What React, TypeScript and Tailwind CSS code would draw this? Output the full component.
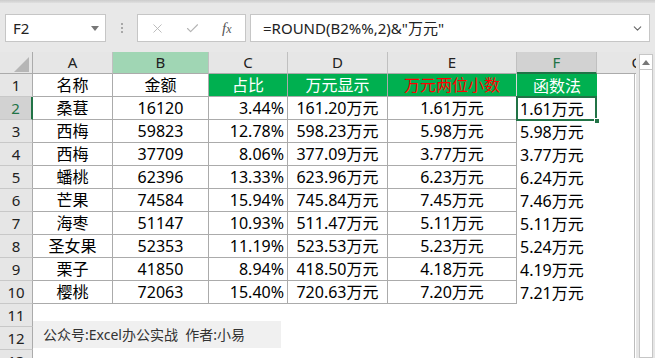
import { X, Check, ChevronDown } from 'lucide-react';

type Row = [string, string, string, string, string, string];

const rows: Row[] = [
  ['桑葚', '16120', '3.44%', '161.20万元', '1.61万元', '1.61万元'],
  ['西梅', '59823', '12.78%', '598.23万元', '5.98万元', '5.98万元'],
  ['西梅', '37709', '8.06%', '377.09万元', '3.77万元', '3.77万元'],
  ['蟠桃', '62396', '13.33%', '623.96万元', '6.23万元', '6.24万元'],
  ['芒果', '74584', '15.94%', '745.84万元', '7.45万元', '7.46万元'],
  ['海枣', '51147', '10.93%', '511.47万元', '5.11万元', '5.11万元'],
  ['圣女果', '52353', '11.19%', '523.53万元', '5.23万元', '5.24万元'],
  ['栗子', '41850', '8.94%', '418.50万元', '4.18万元', '4.19万元'],
  ['樱桃', '72063', '15.40%', '720.63万元', '7.20万元', '7.21万元'],
];

const bordered = 'border-r border-b border-[#ababab]';
const rowHead = 'w-[33px] shrink-0 border-r border-b border-r-[#ababab] border-b-[#c8c8c8] bg-[#e6e6e6] flex items-center justify-center text-[15px] text-[#222]';

const FormulaBar = () => (
  <div className="h-[52px] bg-[#e8e8e8] flex flex-col">
    <div className="h-[3px] bg-gradient-to-b from-[#cccccc] to-[#e0e0e0]" />
    <div className="flex items-start pt-[11px] pl-[5px]">
      <div className="w-[101px] h-[28px] bg-white border border-[#c6c6c6] flex items-center justify-between pl-[7px] pr-[6px] text-[15px] text-[#222]">
        <span>F2</span>
        <span className="w-0 h-0 border-l-[4px] border-r-[4px] border-t-[5px] border-l-transparent border-r-transparent border-t-[#777]" />
      </div>
      <div className="ml-[15px] mt-[9px] flex flex-col gap-[2px]">
        <span className="w-[2px] h-[2px] bg-[#a8a8a8]" />
        <span className="w-[2px] h-[2px] bg-[#a8a8a8]" />
        <span className="w-[2px] h-[2px] bg-[#a8a8a8]" />
      </div>
      <div className="ml-[14px] w-[109px] h-[28px] bg-white border border-[#c6c6c6] flex items-center pl-[12px]">
        <X size={15} strokeWidth={1.4} color="#b4b4b4" />
        <Check size={15} strokeWidth={1.8} color="#b4b4b4" className="ml-[20px]" />
        <span className="ml-[22px] font-[family-name:'Liberation_Serif',serif] italic text-[15px] text-[#555] leading-none">
          f<span className="text-[12px]">x</span>
        </span>
      </div>
      <div className="ml-[4px] w-[400px] h-[28px] bg-white border border-[#c6c6c6] flex items-center justify-between pl-[12px] pr-[5px] text-[15px] text-[#222]">
        <span>=ROUND(B2%%,2)&amp;"万元"</span>
        <ChevronDown size={13} strokeWidth={2} color="#666" />
      </div>
    </div>
  </div>
);

const HeaderRow = () => {
  const cols: [string, string, string][] = [
    ['A', 'w-[80px]', 'bg-[#e6e6e6] text-[#222]'],
    ['B', 'w-[96px]', 'bg-[#a0d6b4] text-[#222]'],
    ['C', 'w-[79px]', 'bg-[#e6e6e6] text-[#222]'],
    ['D', 'w-[100px]', 'bg-[#e6e6e6] text-[#222]'],
    ['E', 'w-[129px]', 'bg-[#e6e6e6] text-[#222]'],
  ];
  return (
    <div className="flex h-[22px]">
      <div className="w-[33px] shrink-0 bg-[#e6e6e6] border-r border-b border-[#ababab] flex items-end justify-end pr-[3px] pb-[1px]">
        <svg width="15" height="15" viewBox="0 0 15 15">
          <polygon points="0,15 15,0 15,15" fill="#b6b6b6" />
        </svg>
      </div>
      {cols.map(([l, w, c]) => (
        <div key={l} className={`${w} ${c} shrink-0 border-r border-r-[#c0c0c0] border-b border-b-[#ababab] flex items-center justify-center text-[15px]`}>
          {l}
        </div>
      ))}
      <div className="w-[80px] shrink-0 bg-[#d2d2d2] border-r border-r-[#c0c0c0] border-b-2 border-b-[#217346] flex items-center justify-center text-[15px] text-[#217346]">
        F
      </div>
      <div className="w-[80px] shrink-0 bg-[#e6e6e6] border-b border-b-[#ababab] flex items-center justify-center text-[15px] text-[#222]">
        G
      </div>
    </div>
  );
};

const TitleRow = () => (
  <div className="flex h-[23px]">
    <div className={rowHead}>1</div>
    <div className={`w-[80px] shrink-0 ${bordered} flex items-center justify-center`}>名称</div>
    <div className={`w-[96px] shrink-0 ${bordered} flex items-center justify-center`}>金额</div>
    <div className={`w-[79px] shrink-0 ${bordered} bg-[#00b050] text-white flex items-center justify-center`}>占比</div>
    <div className={`w-[100px] shrink-0 ${bordered} bg-[#00b050] text-white flex items-center justify-center`}>万元显示</div>
    <div className={`w-[129px] shrink-0 border-b border-[#ababab] border-r border-r-[#d9d9d9] bg-[#00b050] text-[#ff0000] flex items-center justify-center`}>万元两位小数</div>
    <div className="w-[80px] shrink-0 bg-[#00b050] text-white flex items-center justify-center">函数法</div>
    <div className="w-[38px] shrink-0 border-r border-[#bcbcbc]" />
  </div>
);

const DataRow = ({ n, r }: { n: number; r: Row }) => {
  const sel = n === 2;
  return (
    <div className="flex h-[23px]">
      <div
        className={
          sel
            ? 'w-[33px] shrink-0 border-b border-b-[#c8c8c8] border-r-2 border-r-[#217346] bg-[#d2d2d2] flex items-center justify-center text-[15px] text-[#217346]'
            : rowHead
        }
      >
        {n}
      </div>
      <div className={`w-[80px] shrink-0 ${bordered} flex items-center justify-center`}>{r[0]}</div>
      <div className={`w-[96px] shrink-0 ${bordered} flex items-center justify-center`}>{r[1]}</div>
      <div className={`w-[79px] shrink-0 ${bordered} flex items-center justify-end pr-[3px]`}>{r[2]}</div>
      <div className={`w-[100px] shrink-0 ${bordered} flex items-center justify-center`}>{r[3]}</div>
      <div className={`w-[129px] shrink-0 ${bordered} flex items-center justify-center`}>{r[4]}</div>
      <div className="relative w-[80px] shrink-0 flex items-center pl-[3px]">
        {r[5]}
        {sel && (
          <>
            <div className="absolute left-[-1px] top-[-1px] w-[81px] h-[25px] border-2 border-[#217346]" />
            <div className="absolute left-[77px] top-[21px] w-[6px] h-[6px] bg-[#217346] border border-white" />
          </>
        )}
      </div>
      <div className="w-[38px] shrink-0 border-r border-[#bcbcbc]" />
    </div>
  );
};

const EmptyRow = ({ n }: { n: number }) => (
  <div className="flex h-[23px]">
    <div className={rowHead}>{n}</div>
    <div className="w-[564px] shrink-0" />
    <div className="w-[38px] shrink-0 border-r border-[#bcbcbc]" />
  </div>
);

const ScrollBar = () => (
  <div className="w-[19px] shrink-0 bg-[#e6e6e6] pt-[2px] pl-[3px] pr-[2px] flex flex-col">
    <div className="flex-1 bg-white border border-[#c6c6c6] flex flex-col">
      <div className="h-[15px] border-b border-[#c6c6c6] flex items-center justify-center">
        <span className="w-0 h-0 border-l-[4px] border-r-[4px] border-b-[5px] border-l-transparent border-r-transparent border-b-[#777]" />
      </div>
    </div>
  </div>
);

export default function App() {
  return (
    <div className="relative w-[655px] h-[358px] overflow-hidden bg-white font-[family-name:'Noto_Sans','Noto_Sans_CJK_SC',sans-serif] text-[16px] text-black leading-none">
      <FormulaBar />
      <div className="flex h-[306px]">
        <div className="w-[636px] shrink-0 overflow-hidden">
          <HeaderRow />
          <TitleRow />
          {rows.map((r, i) => (
            <DataRow key={i} n={i + 2} r={r} />
          ))}
          <EmptyRow n={11} />
          <EmptyRow n={12} />
          <EmptyRow n={13} />
        </div>
        <ScrollBar />
      </div>
      <div className="absolute left-[33px] top-[321px] w-[248px] h-[27px] bg-[#f0f0f0] flex items-center pl-[10px] text-[14px] text-[#333] whitespace-pre">
        公众号:Excel办公实战  作者:小易
      </div>
    </div>
  );
}
